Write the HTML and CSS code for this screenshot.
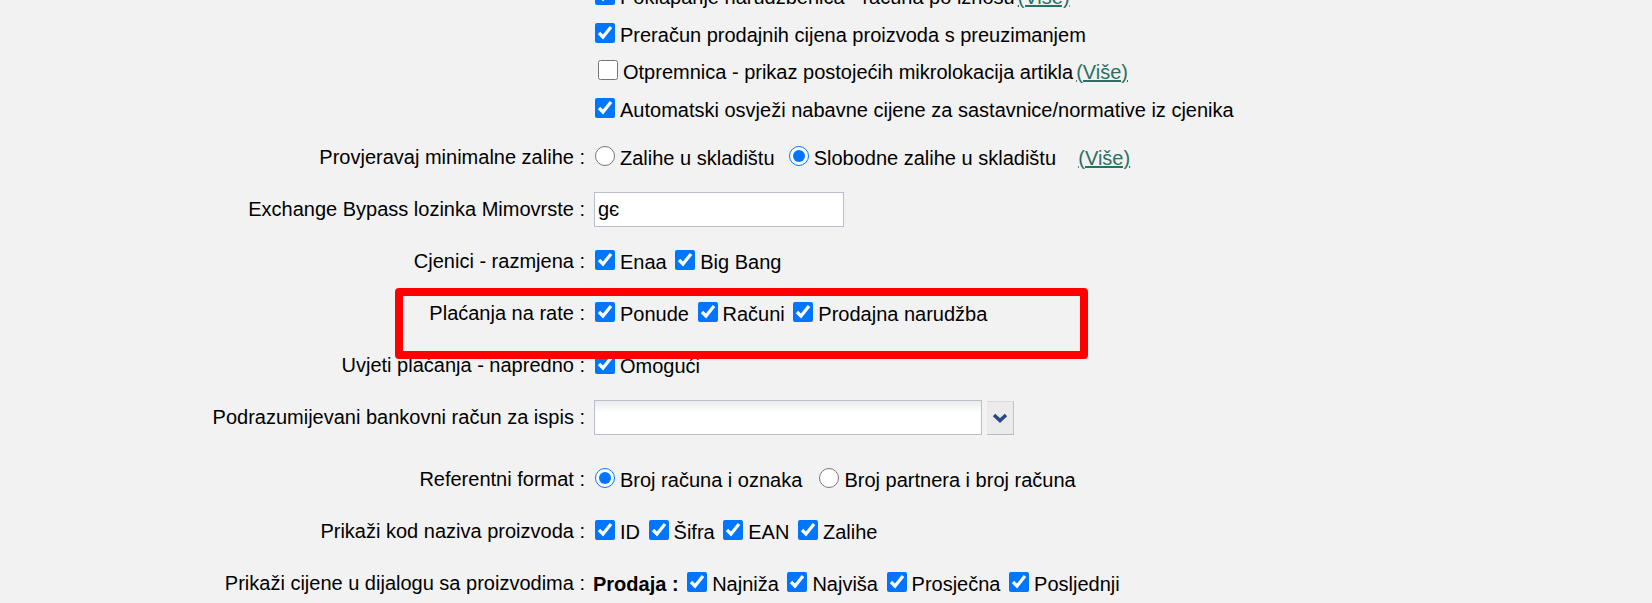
FILE: index.html
```html
<!DOCTYPE html>
<html lang="hr">
<head>
  <meta charset="UTF-8">
  <title>Postavke</title>
  <link rel="stylesheet" href="styles.css">
</head>
<body>

  <div class="settings">

    <!-- Opcije (checkbox lista) -->
    <div class="row row-group">
      <div class="label"></div>
      <div class="field">
        <div class="line"><input type="checkbox" checked>Poklapanje narudžbenica - računa po iznosu<a href="#">(Više)</a></div>
        <div class="line"><input type="checkbox" checked>Preračun prodajnih cijena proizvoda s preuzimanjem</div>
        <div class="line"><input type="checkbox" class="indent">Otpremnica - prikaz postojećih mikrolokacija artikla<a href="#">(Više)</a></div>
        <div class="line"><input type="checkbox" checked>Automatski osvježi nabavne cijene za sastavnice/normative iz cjenika</div>
      </div>
    </div>

    <div class="row">
      <div class="label">Provjeravaj minimalne zalihe :</div>
      <div class="field"><input type="radio" name="zalihe">Zalihe u skladištu &nbsp;<input type="radio" name="zalihe" checked>Slobodne zalihe u skladištu &nbsp;&nbsp; <a href="#">(Više)</a></div>
    </div>

    <div class="row">
      <div class="label">Exchange Bypass lozinka Mimovrste :</div>
      <div class="field"><input type="text" class="text-input" value="gє"></div>
    </div>

    <div class="row">
      <div class="label">Cjenici - razmjena :</div>
      <div class="field"><input type="checkbox" checked>Enaa <input type="checkbox" checked>Big Bang</div>
    </div>

    <div class="row row-marked">
      <div class="label">Plaćanja na rate :</div>
      <div class="field"><input type="checkbox" checked>Ponude <input type="checkbox" checked>Računi <input type="checkbox" checked>Prodajna narudžba</div>
      <div class="highlight"></div>
    </div>

    <div class="row">
      <div class="label">Uvjeti plaćanja - napredno :</div>
      <div class="field"><input type="checkbox" checked>Omogući</div>
    </div>

    <div class="row row-spaced">
      <div class="label">Podrazumijevani bankovni račun za ispis :</div>
      <div class="field field-combo">
        <div class="combo-box"></div>
        <div class="combo-btn">
          <svg width="16" height="10" viewBox="0 0 16 10"><polyline points="2,2 8,7.5 14,2" fill="none" stroke="#2d4a80" stroke-width="3.6"/></svg>
        </div>
      </div>
    </div>

    <div class="row">
      <div class="label">Referentni format :</div>
      <div class="field"><input type="radio" name="ref" checked>Broj računa i oznaka &nbsp;<input type="radio" name="ref" class="spaced">Broj partnera i broj računa</div>
    </div>

    <div class="row">
      <div class="label">Prikaži kod naziva proizvoda :</div>
      <div class="field"><input type="checkbox" checked>ID <input type="checkbox" checked>Šifra <input type="checkbox" checked>EAN <input type="checkbox" checked>Zalihe</div>
    </div>

    <div class="row">
      <div class="label">Prikaži cijene u dijalogu sa proizvodima :</div>
      <div class="field"><b class="group-title">Prodaja :</b> <input type="checkbox" checked>Najniža <input type="checkbox" checked>Najviša <input type="checkbox" checked>Prosječna <input type="checkbox" checked>Posljednji</div>
    </div>

  </div>

</body>
</html>
```

FILE: styles.css
```css
* {
  box-sizing: border-box;
}

body {
  margin: 0;
  background: #f2f2f2;
  color: #000;
  font-family: "Liberation Sans", Arial, sans-serif;
  font-size: 20px;
  line-height: 23px;
  overflow: hidden;
}

/* Form rows */
.settings {
  margin-top: -21px;
}

.row {
  display: grid;
  grid-template-columns: 585px 1fr;
  column-gap: 7px;
  align-items: center;
  height: 52px;
}

.row-group {
  height: auto;
  align-items: start;
  padding-bottom: 2.5px;
}

.row-group .line {
  line-height: 37.5px;
  white-space: nowrap;
}

.row-group .line a {
  margin-left: 3px;
}

.row-spaced {
  margin-bottom: 10px;
}

.row-marked {
  position: relative;
}

.label {
  text-align: right;
  white-space: nowrap;
}

.field {
  white-space: nowrap;
}

/* Checkbox / radio */
input[type="checkbox"],
input[type="radio"] {
  width: 20px;
  height: 20px;
  margin: 0 5px 0 3px;
  vertical-align: -1px;
}

input.indent {
  margin-left: 6px;
}

input.spaced {
  margin-left: 6px;
}

a {
  color: #2b6f63;
  text-decoration: underline;
}

.group-title {
  margin-left: 1px;
}

/* Text input */
.text-input {
  width: 250px;
  height: 35px;
  margin: 0 0 0 2px;
  padding: 0 3px;
  border: 1px solid #b9bdcc;
  background: #fff;
  font: inherit;
  color: #000;
  outline: none;
}

/* Combo (bank account) */
.field-combo {
  display: flex;
  align-items: flex-end;
  padding-left: 2px;
}

.combo-box {
  width: 388px;
  height: 35px;
  border: 1px solid #b9bdcc;
  background: linear-gradient(#e9ecec, #fff 35%);
}

.combo-btn {
  width: 27px;
  height: 34px;
  margin-left: 5px;
  display: flex;
  align-items: center;
  justify-content: center;
  background: #ebebeb;
  border-top: 1px solid #dadada;
  border-right: 1px solid #9fd9ab;
  border-bottom: 1px solid #b5b9c9;
}

/* Red annotation box */
.highlight {
  position: absolute;
  left: 395px;
  top: 0.5px;
  width: 693px;
  height: 71px;
  border: 8px solid #ff0000;
  border-radius: 4px;
}
```
